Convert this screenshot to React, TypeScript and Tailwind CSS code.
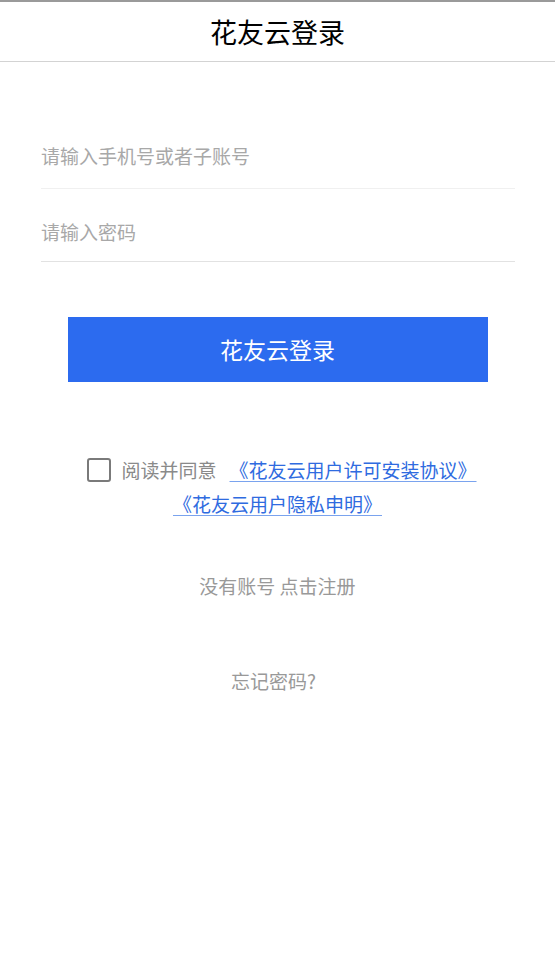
import React from "react";

export default function App() {
  const font = { fontFamily: '"Noto Sans CJK SC", "Noto Sans", sans-serif' };
  return (
    <div className="w-[555px] h-[953px] bg-white flex flex-col" style={font}>
      <div className="h-[2px] bg-[#9a9a9a]" />
      <div className="h-[60px] flex items-center justify-center border-b border-[#d3d3d3]">
        <span className="text-[27px] text-black leading-none">花友云登录</span>
      </div>

      <div className="px-[41px] pr-[40px]">
        <div className="h-[127px] pt-[62px] flex items-center border-b border-[#f0f0f0]">
          <input
            className="w-full h-[28px] text-[19px] outline-none bg-transparent placeholder:text-[#a8a8a8] text-[#333]"
            placeholder="请输入手机号或者子账号"
          />
        </div>
        <div className="h-[73px] pt-[15px] flex items-center border-b border-[#e2e2e2]">
          <input
            type="password"
            className="w-full h-[28px] text-[19px] outline-none bg-transparent placeholder:text-[#a8a8a8] text-[#333]"
            placeholder="请输入密码"
          />
        </div>
      </div>

      <button className="mt-[55px] mx-auto w-[420px] h-[65px] bg-[#2c6bef] text-white text-[23px] flex items-center justify-center">
        花友云登录
      </button>

      <div className="mt-[71px] flex flex-col items-center">
        <div className="flex items-center pl-[9px] h-[34px]">
          <span className="w-[24px] h-[24px] border-[2.5px] border-[#7a7a7a] rounded-[3px] box-border" />
          <span className="ml-[10px] text-[19px] text-[#8a8a8a]">阅读并同意</span>
          <span className="ml-[13px] text-[19px] text-[#2f6be0] underline decoration-[#7aa3ee] underline-offset-[3px]">
            《花友云用户许可安装协议》
          </span>
        </div>
        <div className="h-[35px] flex items-center">
          <span className="text-[19px] text-[#2f6be0] underline decoration-[#7aa3ee] underline-offset-[3px]">
            《花友云用户隐私申明》
          </span>
        </div>
      </div>

      <div className="mt-[49px] text-center text-[19px] text-[#999] leading-[30px]">没有账号 点击注册</div>
      <div className="mt-[65px] text-center text-[19px] text-[#999] leading-[30px] pr-[8px]">忘记密码?</div>
    </div>
  );
}
